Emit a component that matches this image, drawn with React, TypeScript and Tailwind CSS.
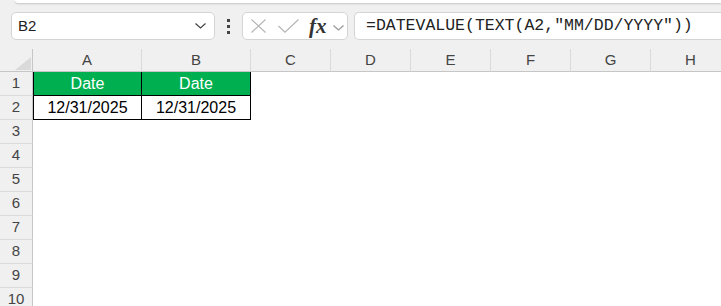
const columns = [
  { label: "A", width: "w-[109px]" },
  { label: "B", width: "w-[109px]" },
  { label: "C", width: "w-[80px]" },
  { label: "D", width: "w-[80px]" },
  { label: "E", width: "w-[80px]" },
  { label: "F", width: "w-[80px]" },
  { label: "G", width: "w-[80px]" },
  { label: "H", width: "w-[80px]" },
];

const rows = [1, 2, 3, 4, 5, 6, 7, 8, 9, 10];

function Chevron({ className }: { className?: string }) {
  return (
    <svg className={className} width="11" height="6" viewBox="0 0 11 6" fill="none">
      <path d="M0.5 0.5 L5.5 5 L10.5 0.5" stroke="currentColor" strokeWidth="1.2" />
    </svg>
  );
}

function FormulaBar() {
  return (
    <div className="flex h-[28px] items-center">
      {/* name box */}
      <div className="ml-[11px] flex h-[28px] w-[204px] items-center justify-between rounded-[5px] border border-[#d4d4d4] bg-white pl-[6px] pr-[8px]">
        <span className="text-[15px] text-[#222]">B2</span>
        <Chevron className="text-[#444]" />
      </div>

      <div className="flex w-[27px] flex-col items-center gap-[3px]">
        <span className="h-[3px] w-[3px] bg-[#444]" />
        <span className="h-[3px] w-[3px] bg-[#444]" />
        <span className="h-[3px] w-[3px] bg-[#444]" />
      </div>

      {/* cancel / enter / insert function */}
      <div className="flex h-[28px] w-[106px] items-center rounded-[5px] border border-[#d4d4d4] bg-white">
        <svg className="ml-[8px]" width="15" height="14" viewBox="0 0 15 14" fill="none">
          <path d="M0.5 0.5 L14.5 13.5 M14.5 0.5 L0.5 13.5" stroke="#b3b3b3" strokeWidth="1.1" />
        </svg>
        <svg className="ml-[12px]" width="21" height="14" viewBox="0 0 21 14" fill="none">
          <path d="M0.5 7 L7 13.2 L20.5 0.5" stroke="#b3b3b3" strokeWidth="1.1" />
        </svg>
        <span className="ml-[10px] font-['Liberation_Serif',serif] text-[21px] font-bold italic leading-none text-[#333]">
          fx
        </span>
        <Chevron className="ml-[6px] mt-[3px] text-[#999]" />
      </div>

      <div className="ml-[6px] flex h-[28px] flex-1 items-center rounded-l-[5px] border border-r-0 border-[#d4d4d4] bg-white pl-[11px]">
        <span className="font-['Liberation_Mono',monospace] text-[16.5px] text-[#222]">
          =DATEVALUE(TEXT(A2,"MM/DD/YYYY"))
        </span>
      </div>
    </div>
  );
}

function Sheet() {
  return (
    <div className="text-[15px] text-[#444]">
      {/* column headers */}
      <div className="flex h-[23px]">
        <div className="relative w-[33px] shrink-0 border-b border-r border-[#c6c6c6] bg-[#f0f0f0]">
          <svg className="absolute left-[15px] top-[8px]" width="16" height="13" viewBox="0 0 16 13">
            <path d="M16 0 L16 13 L0 13 Z" fill="#dadada" />
          </svg>
        </div>
        {columns.map((c) => (
          <div
            key={c.label}
            className={`${c.width} flex shrink-0 items-center justify-center border-b border-r border-b-[#c6c6c6] border-r-[#dadada] bg-[#f0f0f0]`}
          >
            {c.label}
          </div>
        ))}
      </div>

      {rows.map((r) => (
        <div key={r} className="flex h-[24px]">
          <div className="flex w-[33px] shrink-0 items-center justify-center border-b border-r border-b-[#dadada] border-r-[#c6c6c6] bg-[#f0f0f0]">
            {r}
          </div>
          {r === 1 && (
            <>
              <div className="flex w-[109px] shrink-0 items-center justify-center border-b border-l border-r border-black bg-[#00b050] text-[16px] text-white">
                Date
              </div>
              <div className="flex w-[109px] shrink-0 items-center justify-center border-b border-r border-black bg-[#00b050] text-[16px] text-white">
                Date
              </div>
            </>
          )}
          {r === 2 && (
            <>
              <div className="flex w-[109px] shrink-0 items-center justify-center border-b border-l border-r border-black bg-white text-[16px] text-black">
                12/31/2025
              </div>
              <div className="flex w-[109px] shrink-0 items-center justify-center border-b border-r border-black bg-white text-[16px] text-black">
                12/31/2025
              </div>
            </>
          )}
          <div className="flex-1 bg-white" />
        </div>
      ))}
    </div>
  );
}

export default function App() {
  return (
    <div className="h-[306px] w-[721px] overflow-hidden bg-[#f0f0f0] font-['Liberation_Sans',Arial,sans-serif]">
      <div className="ml-[15px] h-[3px] rounded-bl-[5px] bg-white shadow-[0_1px_2px_rgba(0,0,0,0.18)]" />
      <div className="h-[9px]" />
      <FormulaBar />
      <div className="h-[9px]" />
      <Sheet />
    </div>
  );
}
